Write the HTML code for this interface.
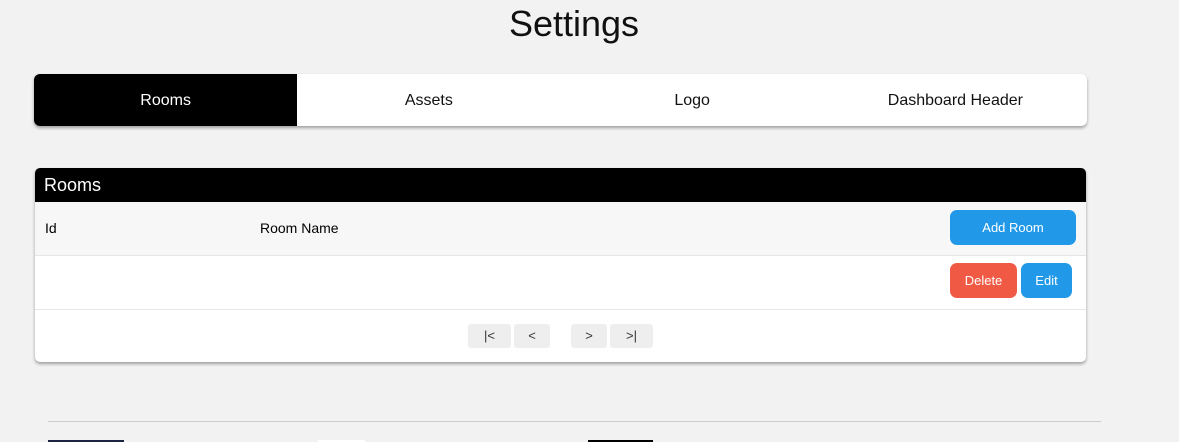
<!DOCTYPE html>
<html><head><style>
body{margin:0;width:1179px;height:442px;background:#f2f2f2;font-family:"Liberation Sans",sans-serif;overflow:hidden;position:relative}
.abs{position:absolute}
h1{position:absolute;left:0;width:1148px;top:3px;margin:0;text-align:center;font-weight:normal;font-size:36px;color:#111}
.tabs{left:34px;top:74px;width:1053px;height:52px;background:#fff;border-radius:6px;box-shadow:0 2px 3px rgba(0,0,0,.35);display:flex;overflow:hidden}
.tabs div{flex:1;text-align:center;line-height:54px;font-size:16px;color:#111}
.tabs div.on{background:#000;color:#fff}
.card{left:35px;top:168px;width:1051px;height:194px;background:#fff;border-radius:5px;box-shadow:0 2px 3px rgba(0,0,0,.35);overflow:hidden}
.hd{height:34px;background:#000;color:#fff;font-size:18px;line-height:34px;padding-left:9px}
.row{position:absolute;left:0;width:1051px;height:53px;border-bottom:1px solid #e6e6e6}
.btn{position:absolute;color:#fff;font-size:13px;text-align:center;border-radius:7px}
.pg{position:absolute;top:156px;height:24px;background:#eee;border-radius:3px;font-size:13px;line-height:24px;text-align:center;color:#333}
</style></head><body>
<h1>Settings</h1>
<div class="abs tabs"><div class="on">Rooms</div><div>Assets</div><div>Logo</div><div>Dashboard Header</div></div>
<div class="abs card">
<div class="hd">Rooms</div>
<div class="row" style="top:34px;background:#f7f7f7">
<span class="abs" style="left:10px;top:18px;font-size:14px">Id</span>
<span class="abs" style="left:225px;top:18px;font-size:14px">Room Name</span>
<div class="btn" style="left:915px;top:8px;width:126px;height:35px;line-height:36px;background:#2199e8">Add Room</div>
</div>
<div class="row" style="top:88px">
<div class="btn" style="left:915px;top:7px;width:67px;height:35px;line-height:36px;background:#f05a44">Delete</div>
<div class="btn" style="left:986px;top:7px;width:51px;height:35px;line-height:36px;background:#2199e8">Edit</div>
</div>
<div class="pg" style="left:433px;width:43px">|&lt;</div>
<div class="pg" style="left:479px;width:36px">&lt;</div>
<div class="pg" style="left:536px;width:36px">&gt;</div>
<div class="pg" style="left:575px;width:43px">&gt;|</div>
</div>
<div class="abs" style="left:48px;top:421px;width:1053px;height:1px;background:#ccc"></div>
<div class="abs" style="left:48px;top:440px;width:76px;height:2px;background:#1a2340"></div>
<div class="abs" style="left:318px;top:440px;width:47px;height:2px;background:#fff"></div>
<div class="abs" style="left:588px;top:440px;width:65px;height:2px;background:#000"></div>
</body></html>
